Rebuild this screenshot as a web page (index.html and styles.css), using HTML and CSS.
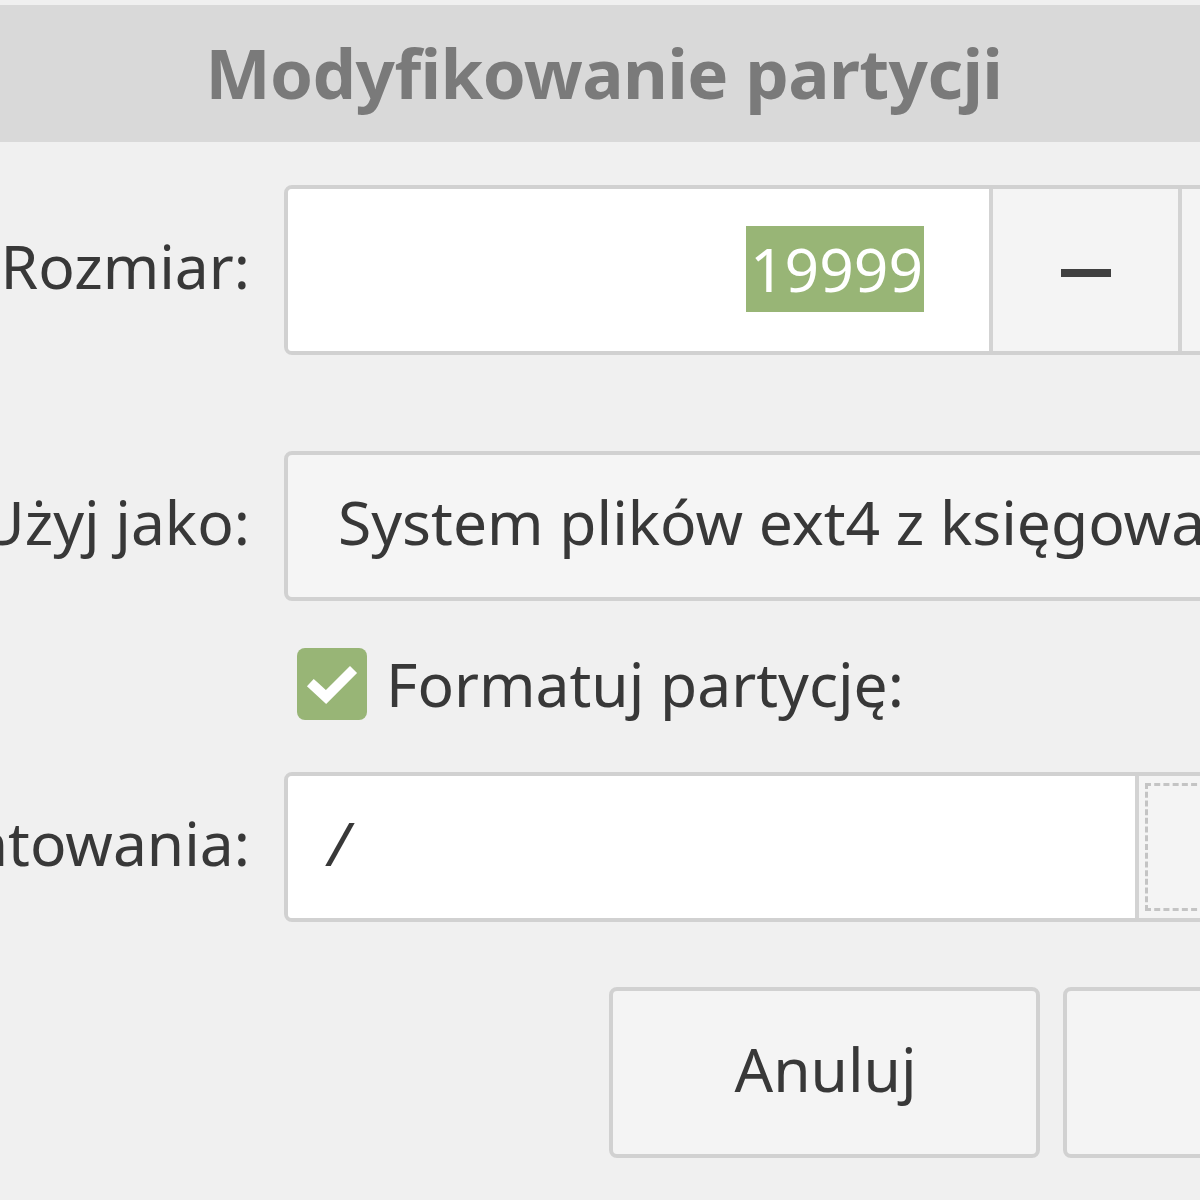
FILE: index.html
```html
<!DOCTYPE html>
<html lang="pl">
<head>
<meta charset="utf-8">
<title>Modyfikowanie partycji</title>
<link rel="stylesheet" href="styles.css">
</head>
<body>
<div class="window">
  <div class="header"><span class="title">Modyfikowanie partycji</span></div>
  <div class="form">
    <div class="row row-size">
      <div class="label">Rozmiar:</div>
      <div class="field spin">
        <div class="spin-entry"><span class="sel">19999</span></div>
        <div class="spin-btn"><span class="minus"></span></div>
        <div class="spin-btn plus-btn"></div>
      </div>
    </div>
    <div class="row row-use">
      <div class="label">Użyj jako:</div>
      <div class="field combo"><span class="combo-text">System plików ext4 z księgowaniem</span></div>
    </div>
    <div class="row row-check">
      <div class="label"></div>
      <div class="check-wrap">
        <span class="checkbox">
          <svg viewBox="0 0 70 72" width="70" height="72"><path d="M17 38 L29 49 L53 25" fill="none" stroke="#ffffff" stroke-width="10" stroke-linecap="square"/></svg>
        </span>
        <span class="check-label">Formatuj partycję:</span>
      </div>
    </div>
    <div class="row row-mount">
      <div class="label">Punkt montowania:</div>
      <div class="field mount">
        <div class="mount-entry"><span class="mount-text">/</span></div>
        <div class="mount-btn"><span class="focus"></span></div>
      </div>
    </div>
    <div class="actions">
      <div class="btn">Anuluj</div>
      <div class="btn">OK</div>
    </div>
  </div>
</div>
</body>
</html>
```

FILE: styles.css
```css
html, body {
  margin: 0;
  padding: 0;
}
body {
  width: 1200px;
  height: 1200px;
  overflow: hidden;
  background: #f0f0f0;
  font-family: "Noto Sans", "Open Sans", sans-serif;
  color: #383838;
}
.window {
  padding-top: 5px;
  background: #f0f0f0;
}
.header {
  height: 137px;
  background: #d9d9d9;
  display: flex;
  align-items: center;
  justify-content: center;
}
.title {
  font-weight: bold;
  font-size: 69px;
  color: #7a7a7a;
  letter-spacing: -0.6px;
  padding-left: 8px;
  margin-top: -4px;
}
.form {
  padding-top: 43px;
  display: flex;
  flex-direction: column;
}
.row {
  display: flex;
  align-items: center;
}
.label {
  flex: 0 0 250px;
  width: 250px;
  display: flex;
  justify-content: flex-end;
  white-space: nowrap;
  font-size: 60.5px;
  margin-right: 34px;
  padding-bottom: 10px;
}
.field {
  flex: 0 0 auto;
  box-sizing: border-box;
  border: 4px solid #d1d1d1;
  border-radius: 8px;
  display: flex;
  overflow: hidden;
}
.spin {
  height: 170px;
  width: 1100px;
}
.spin-entry {
  width: 705px;
  background: #ffffff;
  display: flex;
  align-items: center;
  justify-content: flex-end;
  padding-right: 65px;
  box-sizing: border-box;
  border-right: 4px solid #d3d3d3;
}
.sel {
  background: #98b576;
  color: #ffffff;
  font-size: 60.5px;
  line-height: 86px;
  height: 86px;
  padding: 0 1px 0 4px;
  margin-top: -2px;
}
.spin-btn {
  width: 185px;
  background: #f4f4f4;
  border-right: 4px solid #d3d3d3;
  display: flex;
  align-items: center;
  justify-content: center;
}
.plus-btn {
  border-right: none;
  flex: 1;
}
.minus {
  display: block;
  width: 50px;
  height: 8px;
  background: #404040;
  margin-top: 6px;
}
.row-use {
  margin-top: 96px;
}
.combo {
  height: 150px;
  width: 1000px;
  background: #f5f5f5;
  align-items: center;
}
.combo-text {
  font-size: 60.5px;
  padding-left: 50px;
  white-space: nowrap;
  margin-top: -10px;
}
.row-check {
  margin-top: 47px;
  height: 72px;
}
.row-check .label {
  margin-right: 47px;
  padding-bottom: 0;
}
.check-wrap {
  display: flex;
  align-items: center;
}
.checkbox {
  width: 70px;
  height: 72px;
  border-radius: 8px;
  background: #98b576;
  display: block;
  margin-right: 19px;
}
.checkbox svg {
  display: block;
}
.check-label {
  font-size: 60.5px;
  white-space: nowrap;
  margin-top: -2px;
}
.row-mount {
  margin-top: 52px;
}
.mount {
  height: 150px;
  width: 1000px;
}
.mount-entry {
  width: 847px;
  background: #ffffff;
  border-right: 4px solid #d3d3d3;
  display: flex;
  align-items: center;
}
.mount-text {
  font-size: 60.5px;
  padding-left: 40px;
  font-style: italic;
  margin-top: -10px;
}
.mount-btn {
  flex: 1;
  background: #f4f4f4;
  padding: 7px 0 7px 6px;
  box-sizing: border-box;
}
.focus {
  display: block;
  height: 100%;
  border: 3px dashed #c4c4c4;
  border-right: none;
  box-sizing: border-box;
}
.actions {
  margin-top: 65px;
  padding-left: 609px;
  display: flex;
  gap: 23px;
}
.btn {
  flex: 0 0 auto;
  width: 431px;
  height: 171px;
  box-sizing: border-box;
  border: 4px solid #d1d1d1;
  border-radius: 8px;
  background: #f4f4f4;
  display: flex;
  align-items: center;
  justify-content: center;
  font-size: 60.5px;
  padding-bottom: 8px;
  padding-left: 2px;
}
```
